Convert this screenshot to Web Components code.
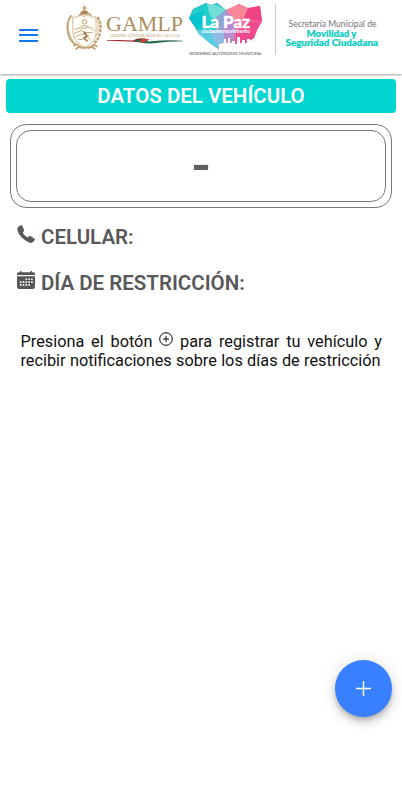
<!DOCTYPE html>
<html lang="es">
<head>
<meta charset="utf-8">
<meta name="viewport" content="width=device-width, initial-scale=1">
<title>Datos del vehículo</title>
<style>
    body{
        margin:0;
        background:#fff;
        font-family:Roboto, "Liberation Sans", sans-serif;
        color:#000;
    }
</style>
</head>
<body>
<vehicle-page>
    <app-header slot="header"><city-logos></city-logos></app-header>
    <section-title>DATOS DEL VEHÍCULO</section-title>
    <plate-card>-</plate-card>
    <data-row icon="phone">CELULAR:</data-row>
    <data-row icon="calendar">DÍA DE RESTRICCIÓN:</data-row>
    <help-note></help-note>
    <add-button slot="fab"></add-button>
</vehicle-page>

<script>
function define(name, html, setup){
    let template = document.createElement('template');
    template.innerHTML = html;
    customElements.define(name, class extends HTMLElement{
        constructor(){
            super();
            this.attachShadow({mode:'open'});
            this.shadowRoot.appendChild(template.content.cloneNode(true));
        }
        connectedCallback(){
            if(setup) setup(this);
        }
    });
}

define('vehicle-page', `
<style>
    :host{
        display:flex;
        flex-direction:column;
        height:800px;
        overflow:hidden;
    }
    main{
        flex:1;
        display:flex;
        flex-direction:column;
        padding:5px 6px 0;
    }
</style>
<slot name="header"></slot>
<main><slot></slot></main>
<slot name="fab"></slot>`);

define('app-header', `
<style>
    :host{
        display:flex;
        align-items:flex-start;
        box-sizing:border-box;
        height:74px;
        background:#fff;
        box-shadow:0 1px 2px rgba(0,0,0,.38);
    }
    button{
        display:flex;
        flex-direction:column;
        gap:3px;
        width:60px;
        margin:0;
        padding:29px 22px 0 19px;
        border:0;
        background:none;
    }
    i{
        width:19px;
        height:2px;
        background:#1677f5;
    }
    i:last-of-type{
        margin-top:1px;
    }
</style>
<button aria-label="Menú"><i></i><i></i><i></i></button>
<slot></slot>`);

// the viewBox keeps the header's own coordinates, so it starts at x=60
define('city-logos', `
<style>
    :host{
        display:block;
    }
    svg{
        display:block;
    }
</style>
<svg width="330" height="62" viewBox="60 0 330 62">
    <defs>
        <clipPath id="heart"><path d="M189 18l4-9 13-6 5 2 6-2 9 7 13-6 9 4 12-2 2 15-5 9-3 8-8 5-7 2-13 5h-6l-9-6-12-10-4-7z"/></clipPath>
        <linearGradient id="ribbon">
            <stop offset="0" stop-color="#b3262b"/>
            <stop offset=".38" stop-color="#8d2a26"/>
            <stop offset=".5" stop-color="#25704b"/>
            <stop offset="1" stop-color="#2a6048"/>
        </linearGradient>
    </defs>
    <g fill="none" stroke="#c0a070" stroke-linecap="round" stroke-linejoin="round">
        <path d="M73 17q5 1 7-2 4 3 8 0 3 3 8 2v17q-1 9-11 13-11-4-12-13z" fill="#fffdf8" stroke="#d3bd98" stroke-width="1"/>
        <path d="M71 16q-5 7-3 16 1 8 7 12" stroke-width="1.900" stroke-dasharray="2.2 1"/>
        <path d="M69 19q-3 13 4 22" stroke="#ceb68e" stroke-width="1"/>
        <path d="M98 18q4 6 2 14-1 8-7 12" stroke-width="2.500" stroke-dasharray="1 3.200"/>
        <path d="M97.500 19q2 11-1 17" stroke-width=".7"/>
        <path d="M74 45.500q3-2 5 1 6 3 12 0 3-3 6 0m-21 2.500q3-3 6-1m13 1q-3-3-6-1" stroke-width="1.700"/>
        <circle cx="84.500" cy="22" r="2.200" stroke-width="1"/>
        <path d="M81 26h7M75 29.500q4-3 9-1 7-3 10 2m-20 3l7-3 4 2 7 0m-17 5q6-5 10-3" stroke-width=".9"/>
        <path d="M78 39.500q4 1 8-2m3-2q-3 2 1 4" stroke-width=".9"/>
        <path d="M84 32l3 4-3 2 3 3" stroke="#9b7444" stroke-width="1.600"/>
        <path d="M79 15.500q3-3 5-1 4-3 7 1" stroke-width="1.500"/>
        <path d="M81 12q3-3 7 0v2h-7z" fill="#a18459" stroke-width="1"/>
        <path d="M84.500 6v5M83 8h3" stroke-width="1.600"/>
    </g>
    <text x="106" y="31.200" font-family="'Liberation Serif', serif" font-size="20" textLength="77" lengthAdjust="spacingAndGlyphs" fill="#ab8c5c">GAMLP</text>
    <text x="110" y="36.700" font-family="'Liberation Serif', serif" font-size="3" textLength="70" lengthAdjust="spacingAndGlyphs" fill="#b9996c">GOBIERNO AUTÓNOMO MUNICIPAL DE LA PAZ</text>
    <path d="M107 40.200q15-.7 26 .3 5-3 11-2l5 1q-4 2.500 2 1.800 16-1.500 32-.6v.6q-16 0-29 2-8 .8-12-.5-12-2-35-1.700z" fill="url(#ribbon)"/>
    <path d="M142 38.500l7 .8-5 3-5-1z" fill="#d73d35"/>
    <path d="M134 41l7-2-1 3z" fill="#276f48"/>

    <g clip-path="url(#heart)">
        <path d="M188 0h78v52h-78z" fill="#f0659b"/>
        <path d="M188 0h40v30l-8 20-32-20z" fill="#20cdcb"/>
        <path d="M206 0l20 10-8 12-8-6z" fill="#72dfd8"/>
        <path d="M188 18l15-8 2 15-10 5z" fill="#04c4ce"/>
        <path d="M196 30l16 0 9 20h-10z" fill="#58cce0"/>
        <path d="M210 31l14-2 4 22h-8z" fill="#8fbce4"/>
        <path d="M216 17l10-7 2 22-12-2z" fill="#8fa5d2"/>
        <path d="M226 10l6 4 5 15-7 22h-4l-3-21z" fill="#b78bd0"/>
        <path d="M226 10l13-7 9 5-6 14-8-3z" fill="#f98798"/>
        <path d="M248 8l14-3 2 17-14-2-6-2z" fill="#ef4386"/>
        <path d="M236 31l12-9 15 0-12 24-15 2z" fill="#ee4a90"/>
    </g>
    <path d="M219 50v-6h3v-1h2v-4h2v4h2v-5h2v5h2v-2h3v3h2v-7h3v6h2v-3h3v4h2v-5h3v11z" fill="#fff"/>
    <g font-family="Lato, sans-serif">
        <text x="201.500" y="27.700" font-weight="900" font-size="16.500" textLength="48.500" lengthAdjust="spacingAndGlyphs" fill="#fff" stroke="#fff" stroke-width=".4">La Paz</text>
        <text x="201.500" y="32.500" font-weight="700" font-size="4.600" textLength="48.500" lengthAdjust="spacingAndGlyphs" fill="#fff">ciudadenmovimiento</text>
        <text x="189" y="55.200" font-size="4.200" textLength="73" lengthAdjust="spacingAndGlyphs" fill="#4f4e51">GOBIERNO AUTÓNOMO MUNICIPAL</text>

        <text x="288.500" y="27.200" font-size="8.600" textLength="88" lengthAdjust="spacingAndGlyphs" fill="#747275">Secretaría Municipal de</text>
        <text x="306.500" y="36.800" font-size="9.200" font-weight="900" textLength="50" lengthAdjust="spacingAndGlyphs" fill="#08cdbd" stroke="#08cdbd" stroke-width=".2">Movilidad y</text>
        <text x="285.500" y="46.200" font-size="9.200" font-weight="900" textLength="92.500" lengthAdjust="spacingAndGlyphs" fill="#08cdbd" stroke="#08cdbd" stroke-width=".2">Seguridad Ciudadana</text>
    </g>
    <path d="M275.500 4v51" stroke="#c9c9c9"/>
</svg>`);

define('section-title', `
<style>
    :host{
        display:block;
        height:34px;
        border-radius:4px;
        background:#00d6d0;
        color:#fff;
        font-size:20.5px;
        font-weight:600;
        line-height:35px;
        text-align:center;
    }
</style>
<slot></slot>`);

define('plate-card', `
<style>
    :host{
        display:flex;
        box-sizing:border-box;
        height:84px;
        margin:11px 4px 0;
        padding:5px;
        border:1px solid #77777a;
        border-radius:16px;
    }
    div{
        flex:1;
        display:flex;
        align-items:center;
        justify-content:center;
        border:1px solid #77777a;
        border-radius:15px;
        color:#5f5f5f;
        font-size:46px;
        font-weight:700;
        line-height:1;
    }
    span{
        transform:scaleX(1.12);
    }
</style>
<div><span><slot></slot></span></div>`);

let icons = {
    phone: `<path d="M5 .5Q3.800-.1 2.600.8L1 2.200Q-.2 3.300.5 5.500 3 13.300 12 17.500q2.600 1 4-.4l1.400-1.500q1-1.300-.2-2.200l-3.300-2.200q-1.200-.7-2.200.2l-1.300 1Q7 10.600 5.700 7.800l1-1.300q.8-1 .2-2.100z"/>`,
    calendar: `<path d="M1.500 1.200H3V0h1.500v1.200h9V0H15v1.200h1.500q1.500 0 1.500 1.500V4H0V2.700q0-1.500 1.500-1.500zM0 5.200h18v11q0 1.800-1.800 1.800H1.800Q0 18 0 16.200z"/>
        <path fill="#fff" d="M8.500 7.500h1.600v1.600H8.500zM11.300 7.500h1.600v1.600h-1.600zM14.100 7.500h1.600v1.600h-1.600zM2.900 10.300h1.600v1.600H2.900zM5.700 10.300h1.600v1.600H5.700zM8.500 10.300h1.600v1.600H8.500zM11.300 10.300h1.600v1.600h-1.600zM14.100 10.300h1.600v1.600h-1.600zM2.900 13.100h1.600v1.600H2.900zM5.700 13.100h1.600v1.600H5.700zM8.500 13.100h1.600v1.600H8.500zM11.300 13.100h1.600v1.600h-1.600z"/>`
};

define('data-row', `
<style>
    :host{
        display:flex;
        align-items:flex-start;
        gap:6.5px;
        height:30px;
        margin-top:16px;
        padding-left:10.5px;
        color:#58585a;
        font-size:20.5px;
        font-weight:600;
        line-height:26px;
    }
    svg{
        flex:none;
        width:18px;
        height:18px;
        margin-top:.7px;
    }
</style>
<svg viewBox="0 0 18 18" fill="currentColor"></svg>
<slot></slot>`, el=>{
    el.shadowRoot.querySelector('svg').innerHTML = icons[el.getAttribute('icon')];
});

define('help-note', `
<style>
    :host{
        display:block;
        margin:32px 14px 0 14.5px;
        color:#111;
        font-size:16.3px;
        line-height:19.5px;
    }
    p{
        margin:0;
        white-space:nowrap;
        text-align:justify;
        text-align-last:justify;
    }
    p + p{
        margin:-1px 1.5px 0 0;
    }
    svg{
        width:14px;
        height:14px;
        vertical-align:1px;
    }
</style>
<p>Presiona el botón <svg viewBox="0 0 14 14" fill="none" stroke="#000"><circle cx="7" cy="7" r="6.300"/><path d="M7 4v6M4 7h6"/></svg> para registrar tu vehículo y</p>
<p>recibir notificaciones sobre los días de restricción</p>`);

define('add-button', `
<style>
    :host{
        position:fixed;
        right:10px;
        bottom:83.5px;
    }
    button{
        display:flex;
        align-items:center;
        justify-content:center;
        width:57px;
        height:57px;
        margin:0;
        padding:0;
        border:0;
        border-radius:50%;
        background:#3880ff;
        box-shadow:0 3px 5px -1px rgba(0,0,0,.2), 0 6px 10px rgba(0,0,0,.14), 0 1px 18px rgba(0,0,0,.12);
    }
</style>
<button aria-label="Registrar vehículo">
    <svg width="17" height="17" viewBox="0 0 17 17" fill="none" stroke="#fff" stroke-width="1.400"><path d="M8.500 1v15M1 8.500h15"/></svg>
</button>`);
</script>
</body>
</html>
